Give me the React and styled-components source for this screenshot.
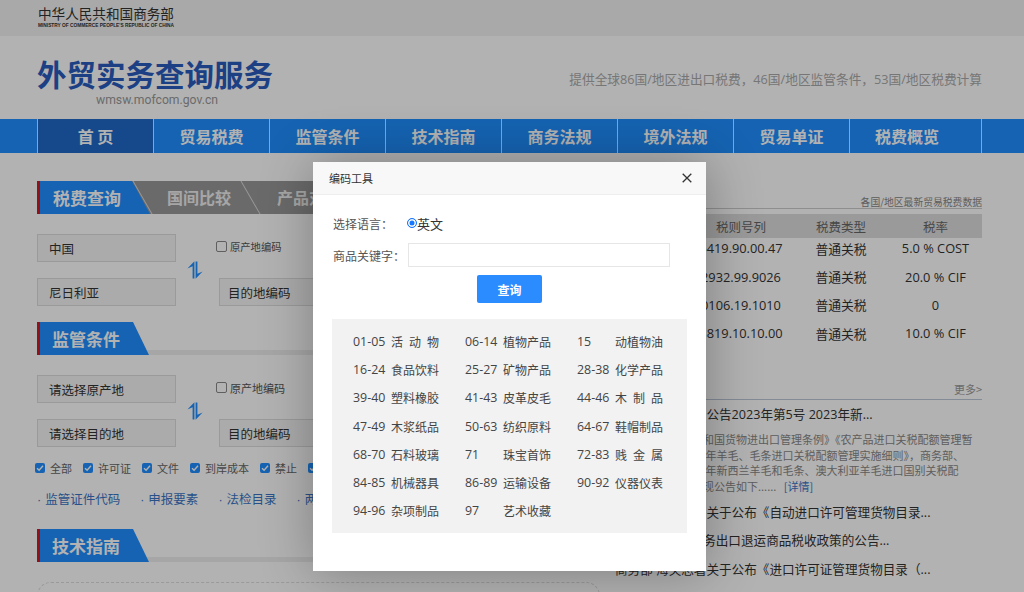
import React from 'react';
import styled, { createGlobalStyle } from 'styled-components';

const GlobalStyle = createGlobalStyle`
  html, body {
    margin: 0;
    height: 100%;
    overflow: hidden;
    background: #fff;
    font-family: "Open Sans", "Noto Sans CJK SC", sans-serif;
  }
  * { box-sizing: border-box; }
`;

const Page = styled.div`
  width: 1024px;
  height: 592px;
  overflow: hidden;
  position: relative;
`;

const TopBar = styled.div`
  height: 36px;
  background: #f2f2f2;
  padding: 5px 0 0 38px;
  display: flex;
  flex-direction: column;
`;

const MinistryName = styled.div`
  font-family: "Noto Sans CJK SC", sans-serif;
  font-size: 13.6px;
  line-height: 16px;
  color: #333;
`;

const MinistryEn = styled.div`
  font-family: "Liberation Sans", sans-serif;
  font-size: 4.8px;
  font-weight: 700;
  line-height: 7px;
  margin-top: 1px;
  color: #333;
  white-space: nowrap;
`;

const Header = styled.header`
  height: 83px;
  background: #fff;
  padding: 0 42px 0 37px;
  display: flex;
  justify-content: space-between;
`;

const Brand = styled.div`
  display: flex;
  flex-direction: column;
  padding-top: 18px;
`;

const BrandTitle = styled.div`
  font-family: "Noto Sans CJK SC", sans-serif;
  font-size: 29.5px;
  font-weight: 700;
  line-height: 38px;
  color: #2a5cbe;
`;

const BrandUrl = styled.div`
  font-family: "Roboto", sans-serif;
  font-size: 12.2px;
  line-height: 14px;
  margin-top: 1px;
  color: #999;
  padding-left: 59px;
`;

const Slogan = styled.div`
  font-size: 12.7px;
  color: #aaa;
  padding-top: 33px;
`;

const Nav = styled.nav`
  height: 34px;
  background: #1f8fff;
  padding-left: 37px;
  display: flex;
`;

const NavItem = styled.div`
  width: 116px;
  flex: none;
  border-left: 1px solid #d8e8f8;
  background: ${(p) => (p.$active ? '#1f69c8' : 'transparent')};
  color: #fff;
  font-family: "Noto Sans CJK SC", sans-serif;
  font-size: 16px;
  font-weight: 700;
  display: flex;
  align-items: center;
  justify-content: center;
  &:last-child {
    width: 133px;
    padding-right: 17px;
    border-right: 1px solid #d8e8f8;
  }
`;

const Main = styled.main`
  display: flex;
  padding: 28px 42px 0 37px;
  gap: 15px;
`;

const LeftCol = styled.div`
  width: 563px;
  flex: none;
`;

const RightCol = styled.div`
  flex: 1;
  min-width: 0;
`;

const SectionHead = styled.div`
  height: 33px;
  margin-top: ${(p) => p.$top || '0'};
  display: flex;
  border-left: 3px solid #d71920;
  background: linear-gradient(to bottom, transparent 28px, #eee 28px);
`;

const TabRow = styled.div`
  height: 33px;
  display: flex;
  border-left: 3px solid #d71920;
  background: #999;
`;

const ActiveTab = styled.div`
  width: 110px;
  flex: none;
  padding-left: 13px;
  background: #1f8fff;
  clip-path: polygon(0 0, 92px 0, 110px 100%, 0 100%);
  font-family: "Noto Sans CJK SC", sans-serif;
  font-size: 17px;
  font-weight: 700;
  line-height: 33px;
  color: #fff;
  white-space: nowrap;
`;

const PlainTab = styled.div`
  width: 110px;
  flex: none;
  padding-left: 17px;
  position: relative;
  font-family: "Noto Sans CJK SC", sans-serif;
  font-size: 16px;
  font-weight: 700;
  line-height: 33px;
  color: #eee;
  white-space: nowrap;
  &::after {
    content: "";
    position: absolute;
    top: 0;
    right: 9px;
    width: 1px;
    height: 33px;
    background: #ddd;
    transform: skewX(30deg);
  }
  ${(p) => p.$first && `
    &::before {
      content: "";
      position: absolute;
      top: 0;
      left: -8px;
      width: 1px;
      height: 33px;
      background: #ddd;
      transform: skewX(30deg);
    }
  `}
`;

const SectionTitle = styled.div`
  width: 109px;
  padding-left: 12px;
  background: #1f8fff;
  clip-path: polygon(0 0, 93px 0, 109px 100%, 0 100%);
  font-family: "Noto Sans CJK SC", sans-serif;
  font-size: 17px;
  font-weight: 700;
  line-height: 33px;
  color: #fff;
`;

const FormGrid = styled.div`
  display: grid;
  grid-template-columns: 139px 43px 190px;
  grid-template-rows: 28px 28px;
  row-gap: 16px;
  margin-top: 20px;
  margin-bottom: 16px;
`;

const Field = styled.div`
  height: 28px;
  border: 1px solid #ddd;
  background: #f5f5f5;
  padding-left: ${(p) => p.$pad || '11px'};
  font-family: "Noto Sans CJK SC", sans-serif;
  font-size: 12.5px;
  line-height: 27px;
  color: #333;
`;

const Swap = styled.div`
  grid-column: 2;
  grid-row: 1 / 3;
  display: flex;
  align-items: center;
  justify-content: center;
  padding-right: 5px;
`;

const CodeCheck = styled.label`
  display: flex;
  align-items: center;
  gap: 3px;
  font-family: "Noto Sans CJK SC", sans-serif;
  font-size: ${(p) => p.$size || '11px'};
  color: #555;
  height: 25px;
  margin-left: -3px;
`;

const BoxPlain = styled.span`
  width: 11px;
  height: 11px;
  border: 1px solid #888;
  border-radius: 2px;
  background: #fff;
  flex: none;
`;

const Checks = styled.div`
  display: flex;
  gap: 11px;
  margin-top: -3px;
  margin-left: -2px;
  height: 16px;
  align-items: center;
  white-space: nowrap;
`;

const CheckItem = styled.label`
  display: flex;
  align-items: center;
  gap: 5px;
  font-family: "Noto Sans CJK SC", sans-serif;
  font-size: 11px;
  color: #666;
`;

const BoxOn = styled.span`
  width: 10px;
  height: 10px;
  border-radius: 2px;
  background: #1f8fff;
  display: flex;
  align-items: center;
  justify-content: center;
  flex: none;
`;

const Links = styled.div`
  display: flex;
  gap: 20px;
  margin-top: 14px;
  height: 17px;
  white-space: nowrap;
`;

const LinkItem = styled.div`
  font-family: "Noto Sans CJK SC", sans-serif;
  font-size: 12.5px;
  line-height: 17px;
  color: #3b74c4;
  &::before {
    content: "·";
    font-family: "Liberation Sans", sans-serif;
    margin-right: 4px;
  }
`;

const DashedBox = styled.div`
  height: 40px;
  margin-top: 20px;
  border: 1px dashed #ddd;
  border-radius: 14px;
`;

const TableCaption = styled.div`
  height: 28px;
  border-bottom: 1px solid #ccc;
  margin-bottom: 5px;
  text-align: right;
  font-family: "Noto Sans CJK SC", sans-serif;
  font-size: 9.8px;
  line-height: 42px;
  color: #888;
`;

const TableRow = styled.div`
  display: grid;
  grid-template-columns: 76px 100px 100px 1fr;
  height: ${(p) => (p.$head ? '24px' : '28.4px')};
  padding-right: 2px;
  align-items: center;
  text-align: center;
  font-size: ${(p) => (p.$head ? '12.5px' : '12.8px')};
  color: ${(p) => (p.$head ? '#666' : '#333')};
  background: ${(p) => (p.$head ? '#ddd' : 'transparent')};
  margin-bottom: ${(p) => (p.$head ? '-4px' : '0')};
`;

const MoreRow = styled.div`
  margin-top: 30px;
  height: 22px;
  border-bottom: 1px solid #bcc7d8;
  text-align: right;
  font-family: "Noto Sans CJK SC", sans-serif;
  font-size: 11px;
  line-height: 23px;
  color: #999;
`;

const NewsList = styled.div`
  padding-top: 1px;
`;

const NewsTitle = styled.div`
  font-size: 12.6px;
  line-height: 28.5px;
  color: #333;
  white-space: nowrap;
  overflow: hidden;
`;

const NewsText = styled.div`
  font-family: "Noto Sans CJK SC", sans-serif;
  font-size: 11px;
  line-height: 15.7px;
  color: #888;
  white-space: nowrap;
  margin: 3px 0 4px;
`;

const More = styled.span`
  color: #3b74c4;
  margin-left: 5px;
`;

const Mask = styled.div`
  position: absolute;
  inset: 0;
  background: rgba(0, 0, 0, 0.3);
`;

const Modal = styled.div`
  position: absolute;
  left: 313px;
  top: 162px;
  width: 393px;
  height: 409px;
  background: #fff;
  box-shadow: 1px 1px 50px rgba(0, 0, 0, 0.3);
  display: flex;
  flex-direction: column;
`;

const ModalHead = styled.div`
  height: 33px;
  flex: none;
  background: #f8f8f8;
  border-bottom: 1px solid #eee;
  padding: 0 14px 0 16px;
  display: flex;
  align-items: center;
  justify-content: space-between;
  font-family: "Noto Sans CJK SC", sans-serif;
  font-size: 11px;
  color: #333;
`;

const ModalBody = styled.div`
  padding: 16px 19px 0;
`;

const FormRow = styled.div`
  display: flex;
  align-items: center;
  height: 24px;
  margin-bottom: ${(p) => p.$mb || '0'};
  font-family: "Noto Sans CJK SC", sans-serif;
  font-size: 12px;
  color: #555;
`;

const RowLabel = styled.div`
  width: 76px;
  flex: none;
  padding-left: 1px;
  white-space: nowrap;
`;

const Radio = styled.span`
  width: 10px;
  height: 10px;
  margin-left: -1px;
  border-radius: 50%;
  border: 1px solid #1677ff;
  background: #1677ff;
  box-shadow: inset 0 0 0 1.5px #fff;
  flex: none;
`;

const RadioLabel = styled.span`
  font-size: 13px;
  color: #333;
`;

const KeywordInput = styled.div`
  width: 262px;
  height: 24px;
  border: 1px solid #e6e6e6;
  background: #fff;
`;

const ActionRow = styled.div`
  display: flex;
  justify-content: center;
  margin-top: 8px;
`;

const QueryButton = styled.button`
  width: 65px;
  height: 28px;
  border: none;
  border-radius: 2px;
  background: #2a8cff;
  color: #fff;
  font-family: "Noto Sans CJK SC", sans-serif;
  font-size: 12px;
  font-weight: 700;
  padding: 0;
`;

const CodePanel = styled.div`
  margin-top: 16px;
  width: 355px;
  height: 214px;
  background: #f2f2f2;
  padding: 8px 0 0 21px;
  display: grid;
  grid-template-columns: repeat(3, 112px);
  grid-auto-rows: 28.3px;
  align-items: center;
`;

const CodeCell = styled.div`
  width: 86px;
  display: flex;
  justify-content: space-between;
  font-size: 12.4px;
  color: #444;
`;

const CodeName = styled.span`
  width: 48px;
  font-family: "Noto Sans CJK SC", sans-serif;
  font-size: 12px;
  text-align-last: justify;
  white-space: nowrap;
`;

const NAV = ['首 页', '贸易税费', '监管条件', '技术指南', '商务法规', '境外法规', '贸易单证', '税费概览'];

const CODES = [
  ['01-05', '活 动 物'], ['06-14', '植物产品'], ['15', '动植物油'],
  ['16-24', '食品饮料'], ['25-27', '矿物产品'], ['28-38', '化学产品'],
  ['39-40', '塑料橡胶'], ['41-43', '皮革皮毛'], ['44-46', '木 制 品'],
  ['47-49', '木浆纸品'], ['50-63', '纺织原料'], ['64-67', '鞋帽制品'],
  ['68-70', '石料玻璃'], ['71', '珠宝首饰'], ['72-83', '贱 金 属'],
  ['84-85', '机械器具'], ['86-89', '运输设备'], ['90-92', '仪器仪表'],
  ['94-96', '杂项制品'], ['97', '艺术收藏'],
];

const RATES = [
  ['中国', '6419.90.00.47', '普通关税', '5.0 % COST'],
  ['中国', '2932.99.9026', '普通关税', '20.0 % CIF'],
  ['中国', '0106.19.1010', '普通关税', '0'],
  ['中国', '8819.10.10.00', '普通关税', '10.0 % CIF'],
];

const CHECKS = ['全部', '许可证', '文件', '到岸成本', '禁止', '限制'];
const LINKS = ['监管证件代码', '申报要素', '法检目录', '两用物项'];

function SwapIcon() {
  return (
    <svg width="16" height="18" viewBox="0 0 16 18">
      <path d="M7.4 0.2V17.4H5.6V5.2L0.4 7.6Z" fill="#1f8fff" />
      <path d="M8.6 17.8V0.6H10.4V12.8L15.6 10.4Z" fill="#1f8fff" />
    </svg>
  );
}

function Tick() {
  return (
    <svg width="8" height="8" viewBox="0 0 8 8">
      <path d="M1 4.2L3.1 6.2L7 1.8" fill="none" stroke="#fff" strokeWidth="1.4" />
    </svg>
  );
}

function SearchForm({ from, to, codeSize }) {
  return (
    <FormGrid>
      <Field>{from}</Field>
      <Swap><SwapIcon /></Swap>
      <CodeCheck $size={codeSize}><BoxPlain />原产地编码</CodeCheck>
      <Field>{to}</Field>
      <Field $pad="8px">目的地编码</Field>
    </FormGrid>
  );
}

export default function App() {
  return (
    <Page>
      <GlobalStyle />
      <TopBar>
        <MinistryName>中华人民共和国商务部</MinistryName>
        <MinistryEn>MINISTRY OF COMMERCE PEOPLE'S REPUBLIC OF CHINA</MinistryEn>
      </TopBar>
      <Header>
        <Brand>
          <BrandTitle>外贸实务查询服务</BrandTitle>
          <BrandUrl>wmsw.mofcom.gov.cn</BrandUrl>
        </Brand>
        <Slogan>提供全球86国/地区进出口税费，46国/地区监管条件，53国/地区税费计算</Slogan>
      </Header>
      <Nav>
        {NAV.map((n, i) => (
          <NavItem key={n} $active={i === 0}>{n}</NavItem>
        ))}
      </Nav>
      <Main>
        <LeftCol>
          <TabRow>
            <ActiveTab>税费查询</ActiveTab>
            <PlainTab $first>国间比较</PlainTab>
            <PlainTab>产品对比</PlainTab>
          </TabRow>
          <SearchForm from="中国" to="尼日利亚" codeSize="10.3px" />
          <SectionHead><SectionTitle>监管条件</SectionTitle></SectionHead>
          <SearchForm from="请选择原产地" to="请选择目的地" />
          <Checks>
            {CHECKS.map((c) => (
              <CheckItem key={c}><BoxOn><Tick /></BoxOn>{c}</CheckItem>
            ))}
          </Checks>
          <Links>
            {LINKS.map((l) => <LinkItem key={l}>{l}</LinkItem>)}
          </Links>
          <SectionHead $top="22px"><SectionTitle>技术指南</SectionTitle></SectionHead>
          <DashedBox />
        </LeftCol>
        <RightCol>
          <TableCaption>各国/地区最新贸易税费数据</TableCaption>
          <TableRow $head>
            <span>国家</span><span>税则号列</span><span>税费类型</span><span>税率</span>
          </TableRow>
          {RATES.map((r) => (
            <TableRow key={r[1]}>
              {r.map((c, i) => <span key={i}>{c}</span>)}
            </TableRow>
          ))}
          <MoreRow>更多&gt;</MoreRow>
          <NewsList>
            <NewsTitle>商务部 海关总署公告2023年第5号 2023年新...</NewsTitle>
            <NewsText>
              根据《中华人民共和国货物进出口管理条例》《农产品进口关税配额管理暂<br />
              行办法》和《2023年羊毛、毛条进口关税配额管理实施细则》，商务部、<br />
              海关总署公布2023年新西兰羊毛和毛条、澳大利亚羊毛进口国别关税配<br />
              额数量有关事项，现公告如下...... <More>[详情]</More>
            </NewsText>
            <NewsTitle>商务部 海关总署关于公布《自动进口许可管理货物目录...</NewsTitle>
            <NewsTitle>关于调整贸易服务出口退运商品税收政策的公告...</NewsTitle>
            <NewsTitle>商务部 海关总署关于公布《进口许可证管理货物目录（...</NewsTitle>
          </NewsList>
        </RightCol>
      </Main>
      <Mask />
      <Modal>
        <ModalHead>
          编码工具
          <svg width="10" height="10" viewBox="0 0 10 10">
            <path d="M0.7 0.7L9.3 9.3M9.3 0.7L0.7 9.3" stroke="#333" strokeWidth="1.3" />
          </svg>
        </ModalHead>
        <ModalBody>
          <FormRow $mb="8px">
            <RowLabel>选择语言：</RowLabel>
            <Radio />
            <RadioLabel>英文</RadioLabel>
          </FormRow>
          <FormRow>
            <RowLabel>商品关键字：</RowLabel>
            <KeywordInput />
          </FormRow>
          <ActionRow><QueryButton>查询</QueryButton></ActionRow>
          <CodePanel>
            {CODES.map(([num, name]) => (
              <CodeCell key={num}>
                <span>{num}</span>
                <CodeName>{name}</CodeName>
              </CodeCell>
            ))}
          </CodePanel>
        </ModalBody>
      </Modal>
    </Page>
  );
}
